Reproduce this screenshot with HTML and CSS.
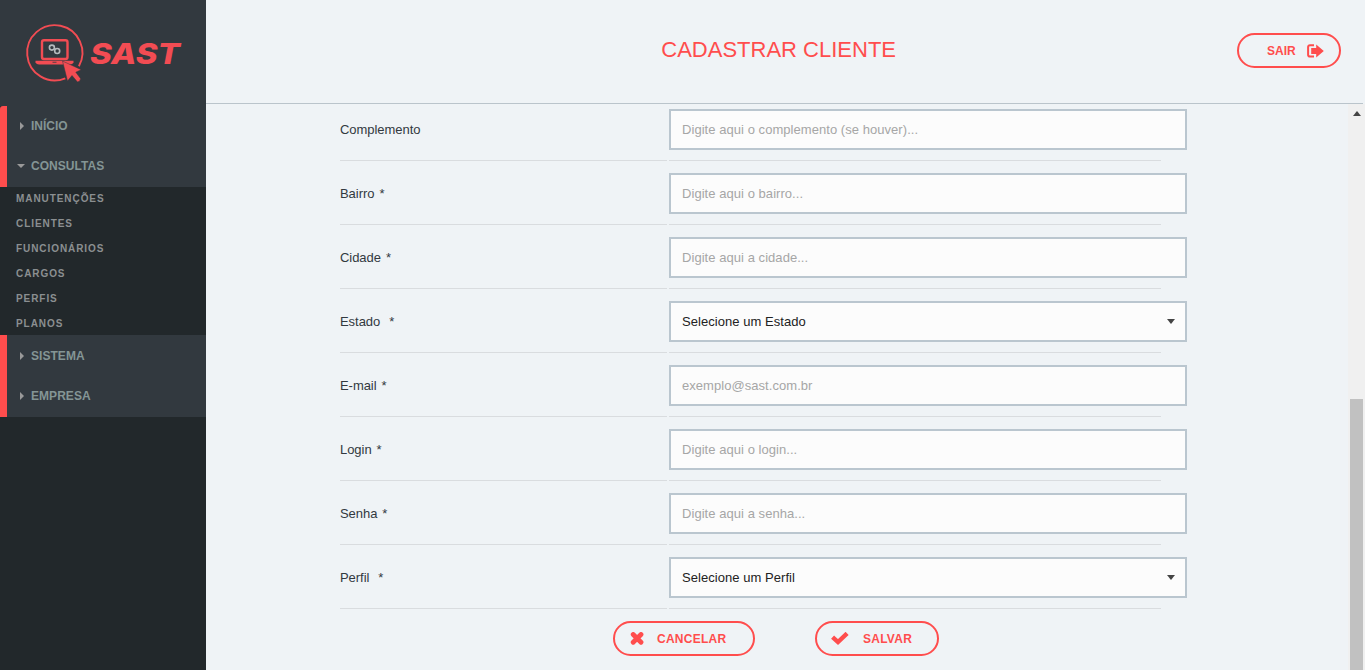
FILE: index.html
```html
<!DOCTYPE html>
<html lang="pt-BR">
<head>
<meta charset="utf-8">
<title>SAST - Cadastrar Cliente</title>
<link rel="stylesheet" href="styles.css">
</head>
<body>
<div class="app">
  <aside class="sidebar">
    <div class="logo">
      <svg width="206" height="106" viewBox="0 0 206 106">
        <g fill="none" stroke="#f24c53">
          <path d="M65.300 78.300A27.600 27.600 0 1 1 78.900 66.200" stroke-width="1.900"/>
          <rect x="42" y="40.200" width="25.500" height="18.800" rx="2" stroke-width="2.400"/>
        </g>
        <path d="M35.500 60.800H73.500V62.500Q72.500 64.600 70 64.600H39Q36.500 64.600 35.500 62.500Z" fill="#f24c53"/>
        <path d="M52.500 61.800H56.500V62.600H52.500Z" fill="#32393f"/>
        <path d="M62.500 61L81.200 69.700L75.800 72.200L80.500 78.500Q80.500 81.500 77.500 82L72 75.500L67.500 81Z" fill="#f24c53" stroke="#32393f" stroke-width=".5"/>
        <g fill="none" stroke="#b4babd" stroke-width="1.600">
          <circle cx="51.900" cy="47.600" r="2.500"/>
          <circle cx="57.200" cy="51" r="2.500"/>
        </g>
        <text class="brand" x="90" y="64" textLength="90" lengthAdjust="spacingAndGlyphs">SAST</text>
      </svg>
    </div>
    <nav>
      <ul class="menu first">
        <li><i class="arrow right"></i><span class="inicio">INÍCIO</span></li>
        <li><i class="arrow down"></i><span class="consultas">CONSULTAS</span></li>
      </ul>
      <ul class="submenu">
        <li>MANUTENÇÕES</li><li>CLIENTES</li><li>FUNCIONÁRIOS</li><li>CARGOS</li><li>PERFIS</li><li>PLANOS</li>
      </ul>
      <ul class="menu last">
        <li><i class="arrow right"></i><span>SISTEMA</span></li>
        <li><i class="arrow right"></i><span>EMPRESA</span></li>
      </ul>
    </nav>
  </aside>
  <main class="main">
    <header class="header">
      <h1>CADASTRAR CLIENTE</h1>
      <button class="btn exit"><span>SAIR</span>
        <svg width="17" height="14" viewBox="0 0 17 14"><path d="M7 1.200H3Q1.100 1.200 1.100 3V10.800Q1.100 12.600 3 12.600H7" fill="none" stroke="#ff4d4d" stroke-width="2"/><path d="M4.200 4H9.200V.4L16.800 7L9.200 13.400V10H4.200Z" fill="#ff4d4d"/></svg>
      </button>
    </header>
    <div class="body">
      <form class="form">
        <div class="row"><label>Complemento</label><div class="cell"><input placeholder="Digite aqui o complemento (se houver)..."></div></div>
        <div class="row"><label>Bairro<b>*</b></label><div class="cell"><input placeholder="Digite aqui o bairro..."></div></div>
        <div class="row"><label>Cidade<b>*</b></label><div class="cell"><input placeholder="Digite aqui a cidade..."></div></div>
        <div class="row"><label>Estado<b class="wide">*</b></label><div class="cell"><div class="select"><span>Selecione um Estado</span><i class="caret"></i></div></div></div>
        <div class="row"><label>E-mail<b>*</b></label><div class="cell"><input placeholder="exemplo@sast.com.br"></div></div>
        <div class="row"><label>Login<b>*</b></label><div class="cell"><input placeholder="Digite aqui o login..."></div></div>
        <div class="row"><label>Senha<b>*</b></label><div class="cell"><input placeholder="Digite aqui a senha..."></div></div>
        <div class="row"><label>Perfil<b class="wide">*</b></label><div class="cell"><div class="select"><span>Selecione um Perfil</span><i class="caret"></i></div></div></div>
        <div class="actions">
          <button type="button" class="btn cancel"><svg width="14" height="14" viewBox="0 0 14 14"><path d="M3.200 2.500L11 10.300M11 2.500L3.200 10.300" stroke="#ff4d4d" stroke-width="4.800" stroke-linecap="round"/></svg><span>CANCELAR</span></button>
          <button type="button" class="btn save"><svg width="18" height="14" viewBox="0 0 18 14"><path d="M3.200 6.600L7 10.100L14.500 2.900" fill="none" stroke="#ff4d4d" stroke-width="4.400" stroke-linecap="square"/></svg><span>SALVAR</span></button>
        </div>
      </form>
      <div class="scrollbar"><i class="up"></i><div class="thumb"></div></div>
    </div>
  </main>
</div>
</body>
</html>
```

FILE: styles.css
```css
* { box-sizing: border-box; }
body { margin: 0; background: #eff3f6; font: 13px "Liberation Sans", Arial, sans-serif; color: #32393f; }
ul { list-style: none; margin: 0; padding: 0; }
.app { display: flex; height: 670px; overflow: hidden; }
.sidebar { width: 206px; background: #22282b; }
.logo { height: 106px; background: #32393f; }
.logo svg { display: block; }
.brand { font: italic 800 29px Inter, sans-serif; fill: #f24c53; }
.menu { background: #32393f; border-left: 7px solid #ff4d4d; height: 82px; }
.menu.first { height: 81px; border-top-left-radius: 3px; }
.menu.last { padding-top: 1px; }
.menu li { display: flex; align-items: center; height: 40px; padding-left: 10px; font-size: 12px; font-weight: bold; color: #849595; letter-spacing: .05px; }
.menu .inicio { letter-spacing: 0; }
.menu .consultas { letter-spacing: .05px; }
.arrow { width: 14px; height: 8px; flex: none; }
.arrow::before { content: ""; display: block; width: 0; height: 0; border: 4px solid transparent; }
.right::before { border-left-color: #999; margin-left: 3px; border-right: 0; }
.down::before { border-top-color: #999; border-bottom: 0; margin-top: 2px; }
.submenu { height: 148px; }
.submenu li { height: 25px; padding-left: 16px; line-height: 23px; font-size: 10px; font-weight: bold; color: #8b8f91; letter-spacing: .93px; }
.main { flex: 1; display: flex; flex-direction: column; }
.header { height: 104px; margin-right: 2px; border-bottom: 1px solid #bac4cb; display: flex; justify-content: flex-end; align-items: flex-start; padding: 33px 22px 0 0; }
h1 { margin: 4px 341px 0 0; font-size: 22px; line-height: 26px; font-weight: normal; color: #ff4d4d; white-space: nowrap; }
.btn { height: 35px; border: 2px solid #ff4d4d; border-radius: 18px; background: transparent; color: #ff4d4d; font: bold 12px "Liberation Sans", Arial, sans-serif; display: flex; align-items: center; padding: 0; letter-spacing: .25px; }
.exit { width: 104px; padding-left: 28px; gap: 11px; letter-spacing: 0; }
.body { display: flex; flex: 1; min-height: 0; }
.form { flex: 1; padding-left: 134px; }
.row { display: flex; gap: 2px; height: 64px; }
.row label, .cell { border-bottom: 1px solid #d9dcdf; padding-top: 12px; }
.row:first-child { height: 57px; }
.row:first-child label, .row:first-child .cell { padding-top: 5px; }
.row label { width: 327px; line-height: 41px; letter-spacing: -.05px; }
.row b { font-weight: normal; margin-left: 5px; }
.row b.wide { margin-left: 9px; }
.cell { width: 492px; }
input, .select { display: flex; align-items: center; width: 518px; height: 41px; border: 2px solid #bac6cf; background: #fcfcfc; padding: 0 11px; font: 13px "Liberation Sans", Arial, sans-serif; letter-spacing: .05px; border-radius: 0; }
input::placeholder { color: #a6a6a6; opacity: 1; }
.select { justify-content: space-between; color: #222; padding-right: 10px; }
.caret { border: 4px solid transparent; border-top: 5px solid #444; border-bottom: 0; }
.actions { display: flex; gap: 60px; padding: 12px 0 0 273px; }
.cancel { width: 142px; padding-left: 15px; gap: 13px; }
.save { width: 124px; padding-left: 14px; gap: 14px; }
.scrollbar { width: 17px; background: #f0f0f0; padding-left: 2px; }
.up { display: block; height: 0; width: 8px; margin: 7px 0 283px 3px; border: 4px solid transparent; border-top: 0; border-bottom: 5px solid #444; }
.thumb { width: 13px; height: 271px; background: #c1c1c1; }
```
